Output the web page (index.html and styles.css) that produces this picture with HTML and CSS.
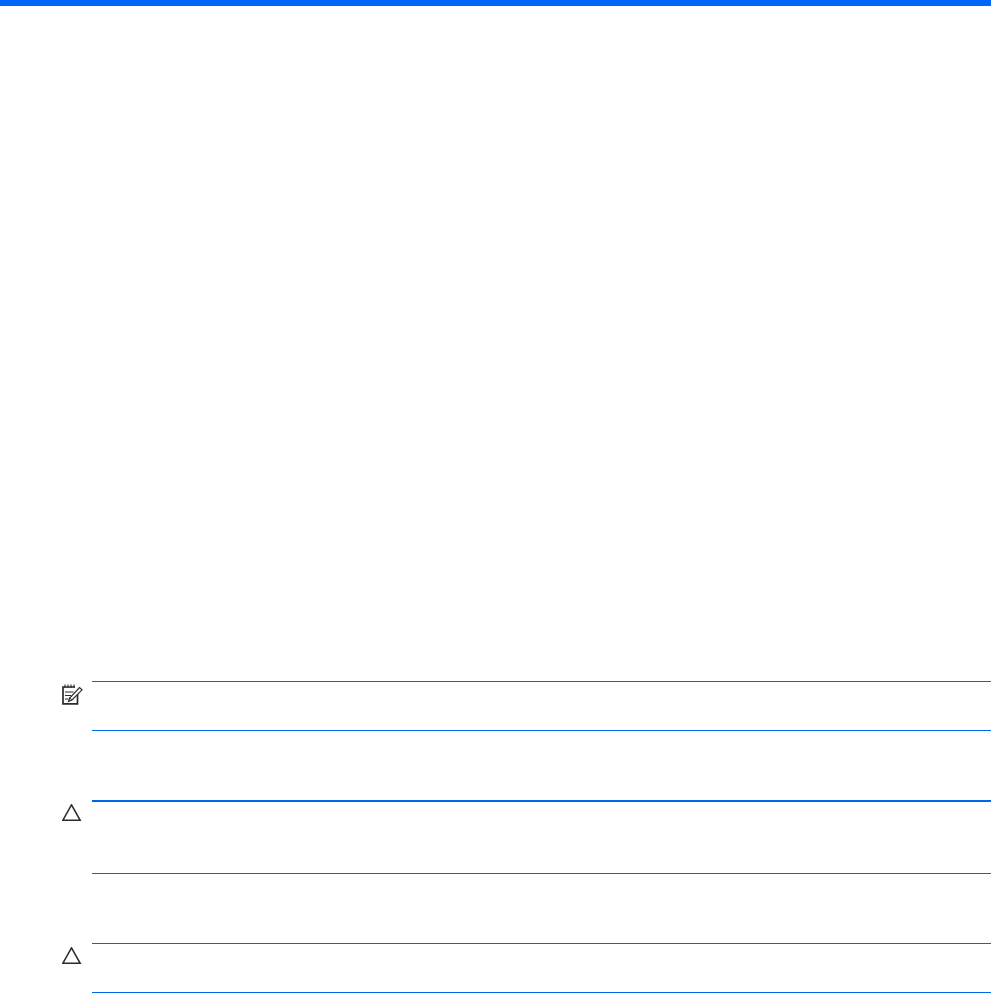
FILE: index.html
```html
<!DOCTYPE html>
<html lang="en">
<head>
<meta charset="utf-8">
<title>Notes</title>
<link rel="stylesheet" href="styles.css">
</head>
<body>
<div class="topbar"></div>
<main class="notices">
  <section class="notice note">
    <svg class="icon" width="21" height="21" viewBox="0 0 21 21" fill="none" stroke="#2b2b2b">
      <path d="M15.500 9v10.800H1V3H13" stroke-width="1.700"/>
      <path d="M3 .5v3.500M6 .5v3.500M9 .5v3.500M12 .5v3.500" stroke-width="1.100"/>
      <path d="M3 8h8.500M3 11.500h6M3 15h3.500" stroke-width="1.200"/>
      <path d="M6.500 17.500l1.200-3.500L17.500 3.500l2.500 2.300L10 16z" stroke-width="1.200" fill="#fff"/>
      <path d="M7.700 14L10 16" stroke-width="1"/>
    </svg>
    <div class="box"></div>
  </section>
  <section class="notice caution first">
    <svg class="icon" width="21" height="18" viewBox="0 0 21 18" fill="none" stroke="#2b2b2b" stroke-width="1.500">
      <path d="M9.500 .8L.8 16.300h17.400z"/>
    </svg>
    <div class="box"></div>
  </section>
  <section class="notice caution second">
    <svg class="icon" width="21" height="18" viewBox="0 0 21 18" fill="none" stroke="#2b2b2b" stroke-width="1.500">
      <path d="M9.500 .8L.8 16.300h17.400z"/>
    </svg>
    <div class="box"></div>
  </section>
</main>
</body>
</html>
```
FILE: styles.css
```css
html, body {
  margin: 0;
  padding: 0;
  background: #fff;
}
body {
  height: 993px;
  overflow: hidden;
}
.topbar {
  height: 6px;
  width: 991px;
  background: #0066ff;
}
.notices {
  padding: 675px 1px 0 62px;
}
.notice {
  display: flex;
  align-items: flex-start;
  gap: 9px;
}
.icon {
  flex: none;
  margin-top: 4px;
}
.note .icon {
  margin-top: 3px;
}
.box {
  flex: 1;
  border-top: 1px solid #0066e6;
  border-bottom: 1px solid #0066e6;
}
.note .box {
  height: 48px;
}
.first {
  margin-top: 69px;
}
.first .box {
  height: 71px;
  border-top-width: 2px;
}
.second {
  margin-top: 69px;
}
.second .box {
  height: 48px;
}
```
